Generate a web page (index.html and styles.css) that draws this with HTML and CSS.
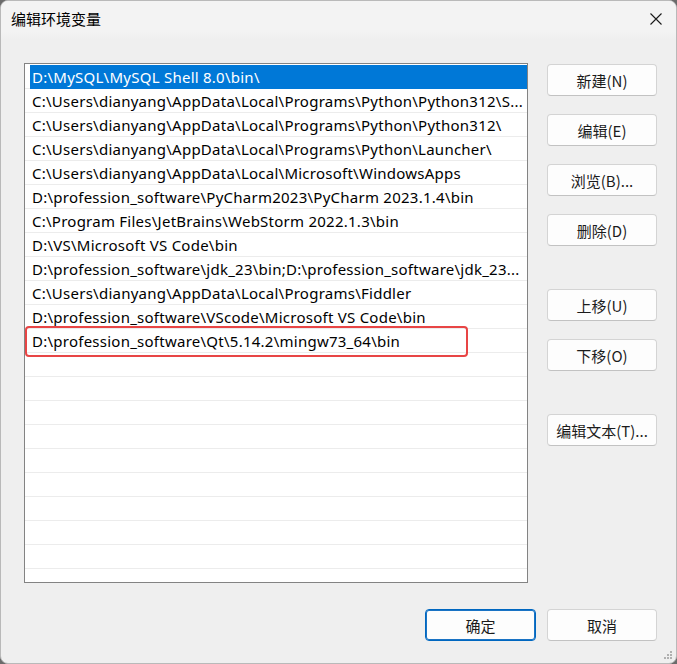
FILE: index.html
```html
<!DOCTYPE html>
<html lang="zh-CN">
<head>
<meta charset="utf-8">
<title>编辑环境变量</title>
<link rel="stylesheet" href="styles.css">
</head>
<body>
<div class="window">
  <div class="titlebar">
    <span class="title">编辑环境变量</span>
    <svg class="close" width="12" height="12" viewBox="0 0 12 12"><path d="M0.5 0.5 L11.5 11.5 M11.5 0.5 L0.5 11.5" stroke="#1a1a1a" stroke-width="1.1" fill="none"/></svg>
  </div>
  <div class="content">
    <div class="list">
      <div class="row"><span class="item sel">D:\MySQL\MySQL Shell 8.0\bin\</span></div>
      <div class="row"><span class="item">C:\Users\dianyang\AppData\Local\Programs\Python\Python312\S...</span></div>
      <div class="row"><span class="item">C:\Users\dianyang\AppData\Local\Programs\Python\Python312\</span></div>
      <div class="row"><span class="item">C:\Users\dianyang\AppData\Local\Programs\Python\Launcher\</span></div>
      <div class="row"><span class="item">C:\Users\dianyang\AppData\Local\Microsoft\WindowsApps</span></div>
      <div class="row"><span class="item">D:\profession_software\PyCharm2023\PyCharm 2023.1.4\bin</span></div>
      <div class="row"><span class="item">C:\Program Files\JetBrains\WebStorm 2022.1.3\bin</span></div>
      <div class="row"><span class="item">D:\VS\Microsoft VS Code\bin</span></div>
      <div class="row"><span class="item">D:\profession_software\jdk_23\bin;D:\profession_software\jdk_23...</span></div>
      <div class="row"><span class="item">C:\Users\dianyang\AppData\Local\Programs\Fiddler</span></div>
      <div class="row"><span class="item">D:\profession_software\VScode\Microsoft VS Code\bin</span></div>
      <div class="row"><span class="item">D:\profession_software\Qt\5.14.2\mingw73_64\bin</span></div>
      <div class="row"></div>
      <div class="row"></div>
      <div class="row"></div>
      <div class="row"></div>
      <div class="row"></div>
      <div class="row"></div>
      <div class="row"></div>
      <div class="row"></div>
      <div class="row"></div>
      <div class="row"></div>
      <div class="highlight"></div>
    </div>
    <div class="side">
      <button class="btn">新建(N)</button>
      <button class="btn">编辑(E)</button>
      <button class="btn">浏览(B)...</button>
      <button class="btn">删除(D)</button>
      <button class="btn group">上移(U)</button>
      <button class="btn">下移(O)</button>
      <button class="btn group">编辑文本(T)...</button>
    </div>
  </div>
  <div class="footer">
    <button class="btn default">确定</button>
    <button class="btn">取消</button>
  </div>
  <svg class="grip" width="10" height="10" viewBox="0 0 10 10">
    <rect x="7" y="1" width="2" height="2" fill="#b0b0b0"/>
    <rect x="4" y="4" width="2" height="2" fill="#b0b0b0"/>
    <rect x="7" y="4" width="2" height="2" fill="#b0b0b0"/>
    <rect x="1" y="7" width="2" height="2" fill="#b0b0b0"/>
    <rect x="4" y="7" width="2" height="2" fill="#b0b0b0"/>
    <rect x="7" y="7" width="2" height="2" fill="#b0b0b0"/>
  </svg>
</div>
</body>
</html>
```
FILE: styles.css
```css
* { box-sizing: border-box; }
html, body { margin: 0; padding: 0; }
body {
  width: 677px;
  height: 664px;
  background: #6b6b6b;
  font-family: "Noto Sans", "Noto Sans CJK SC", sans-serif;
  overflow: hidden;
}
.window {
  position: relative;
  width: 677px;
  height: 664px;
  background: #efefef;
  border: 1px solid #b9b9b9;
  border-radius: 8px;
  overflow: hidden;
}
.titlebar {
  height: 38px;
  background: linear-gradient(#f3f3f3 0, #f3f3f3 30px, #efefef 38px);
  display: flex;
  align-items: center;
  justify-content: space-between;
  padding: 0 14px 3px 10px;
}
.title {
  font-family: "Noto Sans CJK SC", sans-serif;
  font-size: 15px;
  color: #000;
  line-height: 1;
}
.close { display: block; margin-top: 1px; }
.content {
  display: flex;
  padding: 24px 0 0 23px;
  gap: 19px;
}
.list {
  position: relative;
  width: 504px;
  height: 520px;
  background: #fff;
  border: 1px solid #838383;
  padding-top: 1px;
  overflow: hidden;
}
.row {
  height: 24px;
  border-bottom: 1px solid #ececec;
  display: flex;
}
.item {
  display: block;
  height: 23px;
  line-height: 24px;
  padding-left: 7px;
  font-family: "Noto Sans", "Noto Sans CJK SC", sans-serif;
  font-size: 15px;
  letter-spacing: 0.25px;
  color: #000;
  white-space: nowrap;
}
.item.sel {
  flex: 1;
  margin-left: 5px;
  padding-left: 2px;
  height: 24px;
  background: #0078d7;
  color: #fff;
}
.highlight {
  position: absolute;
  left: 0;
  top: 262px;
  width: 443px;
  height: 31px;
  border: 2px solid #e84545;
  border-radius: 4px;
}
.side {
  display: flex;
  flex-direction: column;
  padding-top: 1px;
}
.btn {
  width: 110px;
  height: 32px;
  margin: 0 0 18px 0;
  padding: 0;
  background: #fdfdfd;
  border: 1px solid #d4d4d4;
  border-bottom-color: #c2c2c2;
  border-radius: 4px;
  font-family: "Noto Sans CJK SC", sans-serif;
  font-size: 15px;
  color: #1b1b1b;
  line-height: 1;
}
.btn.group { margin-top: 25px; }
.footer {
  display: flex;
  justify-content: flex-end;
  gap: 11px;
  padding: 26px 19px 0 0;
}
.footer .btn { margin: 0; }
.btn.default {
  width: 111px;
  border: 1px solid #0067c0;
  box-shadow: inset 0 0 0 1px #1a73c4;
}
.grip {
  position: absolute;
  right: 3px;
  bottom: 3px;
}
```
